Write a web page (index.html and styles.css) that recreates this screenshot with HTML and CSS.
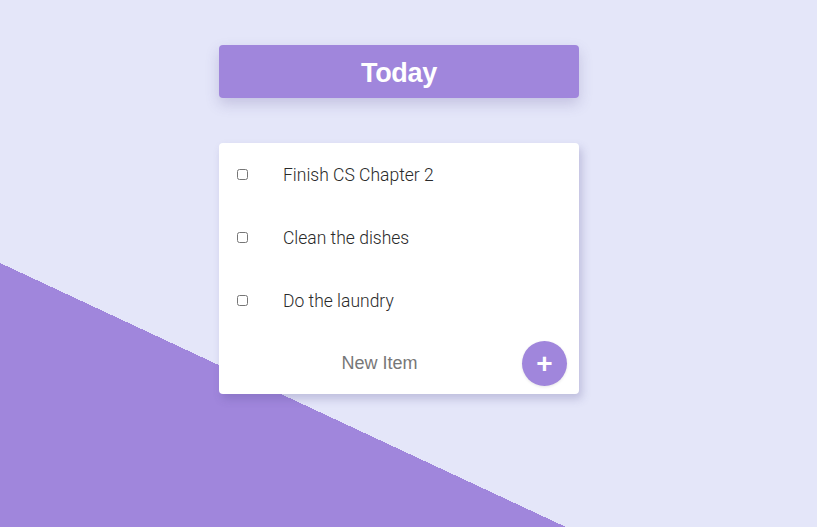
FILE: index.html
```html
<!DOCTYPE html>
<html>
<head>
<meta charset="utf-8">
<link rel="stylesheet" href="styles.css">
</head>
<body>
<main class="app">
  <header class="heading"><h1>Today</h1></header>
  <section class="card">
    <div class="item"><input type="checkbox"><p>Finish CS Chapter 2</p></div>
    <div class="item"><input type="checkbox"><p>Clean the dishes</p></div>
    <div class="item"><input type="checkbox"><p>Do the laundry</p></div>
    <form class="new-item">
      <span class="placeholder">New Item</span>
      <button type="button" class="add">+</button>
    </form>
  </section>
</main>
</body>
</html>
```
FILE: styles.css
```css
html {
  height: 100%;
}
body {
  margin: 0;
  height: 527px;
  overflow: hidden;
  background-color: #e4e6f9;
  background-image: linear-gradient(to top right, #a086dc 50%, rgba(0,0,0,0) 50%);
  background-repeat: no-repeat;
  background-size: 566px 264px;
  background-position: left bottom;
  font-family: "Liberation Sans", Arial, sans-serif;
}
.app {
  width: 360px;
  margin-left: 219px;
  padding-top: 45px;
}
.heading {
  height: 53px;
  background: #a086dc;
  border-radius: 4px;
  box-shadow: 0 6px 14px rgba(80, 70, 140, 0.22);
  display: flex;
  align-items: center;
  justify-content: center;
}
.heading h1 {
  margin: 4px 0 0;
  color: #fff;
  font-size: 27px;
  font-weight: 700;
  letter-spacing: -0.3px;
}
.card {
  margin-top: 45px;
  background: #fff;
  border-radius: 4px;
  box-shadow: 3px 5px 9px rgba(80, 70, 140, 0.25);
}
.item {
  height: 63px;
  display: flex;
  align-items: center;
}
.item input {
  margin: 0 0 0 18px;
  width: 11px;
  height: 11px;
}
.item p {
  margin: 0 0 0 35px;
  font-family: Roboto, "Liberation Sans", sans-serif;
  font-size: 17.5px;
  color: #2a2a2a;
  font-weight: 300;
}
.new-item {
  height: 62px;
  display: flex;
  align-items: center;
  margin: 0;
}
.placeholder {
  flex: 1;
  text-align: center;
  padding-left: 18px;
  font-size: 18px;
  color: #777;
}
.add {
  width: 45px;
  height: 45px;
  margin: 0 12px 0 0;
  border: none;
  border-radius: 50%;
  background: #a086dc;
  color: #fff;
  font-family: "Liberation Sans", Arial, sans-serif;
  font-size: 28px;
  font-weight: 700;
  line-height: 45px;
  padding: 0 0 4px;
  box-shadow: 0 1px 3px rgba(0,0,0,0.1);
}
```
